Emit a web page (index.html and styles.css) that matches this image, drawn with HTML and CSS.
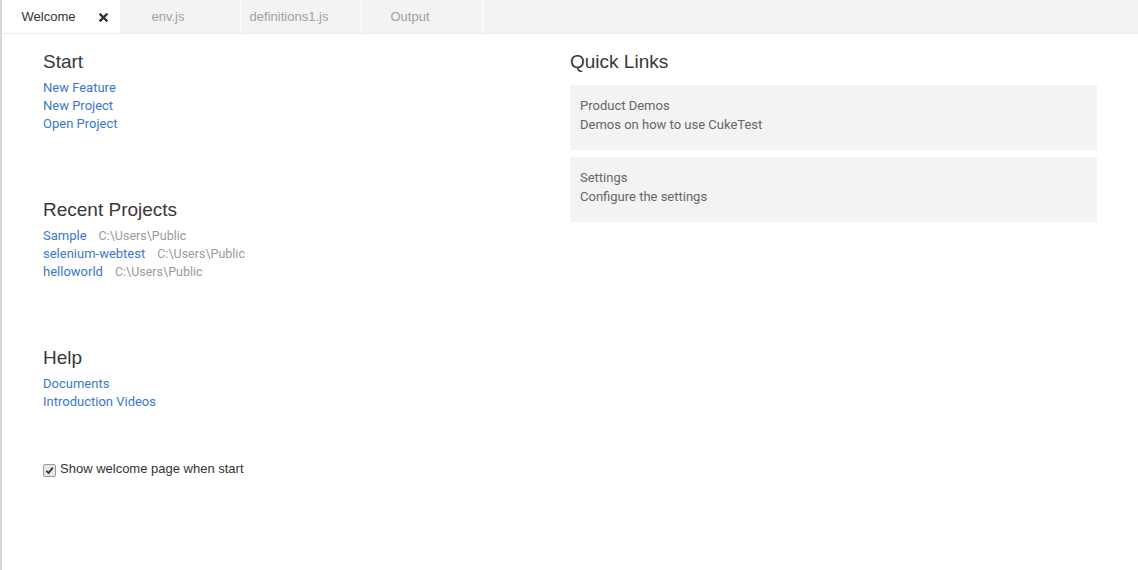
FILE: index.html
```html
<!DOCTYPE html>
<html>
<head>
<meta charset="utf-8">
<link rel="stylesheet" href="styles.css">
</head>
<body>
<div class="app">
  <div class="tabbar">
    <div class="tab active">
      <span class="tab-label">Welcome</span>
      <span class="tab-close"><svg width="9" height="9" viewBox="0 0 9 9"><path d="M1.5 1.5L7.5 7.5M7.5 1.5L1.5 7.5" stroke="#333" stroke-width="2.4" stroke-linecap="square"/></svg></span>
    </div>
    <div class="tab"><span class="tab-label">env.js</span><span class="tab-close"></span></div>
    <div class="tab"><span class="tab-label">definitions1.js</span><span class="tab-close"></span></div>
    <div class="tab"><span class="tab-label">Output</span><span class="tab-close"></span></div>
  </div>
  <div class="content">
    <div class="col">
      <section class="section">
        <h2 class="heading">Start</h2>
        <a class="link" href="#">New Feature</a>
        <a class="link" href="#">New Project</a>
        <a class="link" href="#">Open Project</a>
      </section>
      <section class="section">
        <h2 class="heading">Recent Projects</h2>
        <div class="recent"><a class="link" href="#">Sample</a><span class="path">C:\Users\Public</span></div>
        <div class="recent"><a class="link" href="#">selenium-webtest</a><span class="path">C:\Users\Public</span></div>
        <div class="recent"><a class="link" href="#">helloworld</a><span class="path">C:\Users\Public</span></div>
      </section>
      <section class="section last">
        <h2 class="heading">Help</h2>
        <a class="link" href="#">Documents</a>
        <a class="link" href="#">Introduction Videos</a>
      </section>
      <label class="check">
        <span class="box"><svg width="9" height="9" viewBox="0 0 9 9"><path d="M1.3 4.8L3.6 7L7.8 1.6" fill="none" stroke="#333" stroke-width="1.8"/></svg></span>
        <span class="check-label">Show welcome page when start</span>
      </label>
    </div>
    <div class="col">
      <h2 class="heading ql">Quick Links</h2>
      <div class="card">
        <div class="card-title">Product Demos</div>
        <div class="card-desc">Demos on how to use CukeTest</div>
      </div>
      <div class="card">
        <div class="card-title">Settings</div>
        <div class="card-desc">Configure the settings</div>
      </div>
    </div>
  </div>
</div>
</body>
</html>
```

FILE: styles.css
```css
html, body {
  margin: 0;
  padding: 0;
  background: #fff;
}
.app {
  width: 1138px;
  height: 570px;
  box-sizing: border-box;
  border-left: 2px solid #d6d7db;
  font-family: "Liberation Sans", Arial, sans-serif;
}
.tabbar {
  display: flex;
  height: 33px;
  background: #f3f3f3;
  border-bottom: 1px solid #ececec;
}
.tab {
  display: flex;
  align-items: center;
  width: 120px;
  height: 33px;
  border-right: 1px solid #fff;
  font-size: 13px;
  color: #a0a0a0;
}
.tab.active {
  width: 117px;
  background: #fff;
  color: #333;
}
.tab-label {
  flex: 1;
  text-align: center;
  white-space: nowrap;
}
.tab-close {
  width: 24px;
  height: 33px;
  display: flex;
  align-items: center;
  justify-content: flex-start;
  box-sizing: border-box;
}
.tab.active .tab-close {
  padding-left: 4px;
  padding-top: 1px;
}
.content {
  display: grid;
  grid-template-columns: 527px 527px;
  padding: 16px 41px 0 41px;
}
.col {
  display: flex;
  flex-direction: column;
}
.heading {
  margin: 0 0 5px 0;
  font-family: "Liberation Sans", Arial, sans-serif;
  font-weight: normal;
  font-size: 19px;
  line-height: 24px;
  color: #383838;
}
.heading.ql {
  margin-bottom: 11px;
}
.section {
  display: flex;
  flex-direction: column;
  align-items: flex-start;
  margin-bottom: 65px;
}
.section.last {
  margin-bottom: 49px;
}
.link {
  font-family: Roboto, "Open Sans", sans-serif;
  font-size: 13px;
  line-height: 18px;
  color: #3b78c9;
  text-decoration: none;
}
.recent {
  display: flex;
  gap: 12px;
  line-height: 18px;
}
.path {
  font-family: Roboto, "Open Sans", sans-serif;
  font-size: 12.5px;
  line-height: 18px;
  color: #9a9a9a;
}
.check {
  display: flex;
  align-items: center;
  gap: 4px;
  font-size: 13px;
  line-height: 18px;
  color: #333;
}
.box {
  width: 11px;
  height: 11px;
  border: 1px solid #9a9a9a;
  border-radius: 2px;
  background: #e8e8e8;
  display: flex;
  align-items: center;
  justify-content: center;
  margin-top: 3px;
}
.card {
  background: #f3f3f3;
  height: 65px;
  box-sizing: border-box;
  padding: 11px 10px 10px;
  margin-bottom: 7px;
  font-family: Roboto, "Open Sans", sans-serif;
  font-size: 13px;
  line-height: 19px;
  color: #666;
}
```
